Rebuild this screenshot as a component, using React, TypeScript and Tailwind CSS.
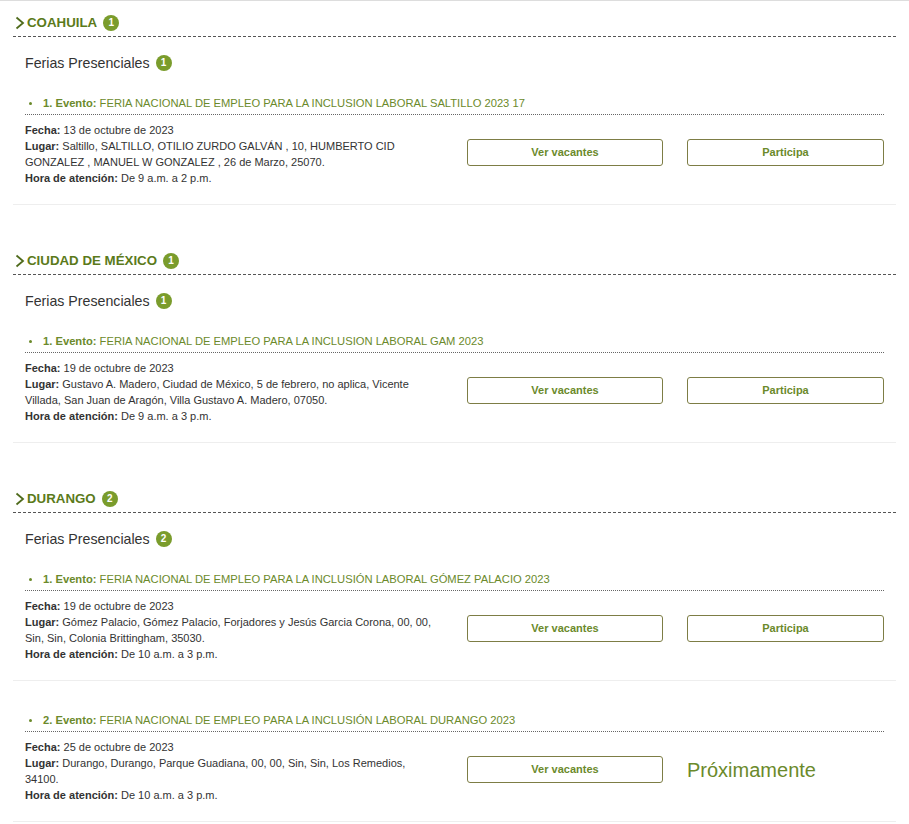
import React from 'react';

type Evento = {
  titulo: string;
  fecha: string;
  lugar: string;
  hora: string;
  proximamente?: boolean;
};

type Estado = {
  nombre: string;
  eventos: Evento[];
};

const estados: Estado[] = [
  {
    nombre: 'COAHUILA',
    eventos: [
      {
        titulo: 'FERIA NACIONAL DE EMPLEO PARA LA INCLUSION LABORAL SALTILLO 2023 17',
        fecha: '13 de octubre de 2023',
        lugar:
          'Saltillo, SALTILLO, OTILIO ZURDO GALVÁN , 10, HUMBERTO CID GONZALEZ , MANUEL W GONZALEZ , 26 de Marzo, 25070.',
        hora: 'De 9 a.m. a 2 p.m.',
      },
    ],
  },
  {
    nombre: 'CIUDAD DE MÉXICO',
    eventos: [
      {
        titulo: 'FERIA NACIONAL DE EMPLEO PARA LA INCLUSION LABORAL GAM 2023',
        fecha: '19 de octubre de 2023',
        lugar:
          'Gustavo A. Madero, Ciudad de México, 5 de febrero, no aplica, Vicente Villada, San Juan de Aragón, Villa Gustavo A. Madero, 07050.',
        hora: 'De 9 a.m. a 3 p.m.',
      },
    ],
  },
  {
    nombre: 'DURANGO',
    eventos: [
      {
        titulo: 'FERIA NACIONAL DE EMPLEO PARA LA INCLUSIÓN LABORAL GÓMEZ PALACIO 2023',
        fecha: '19 de octubre de 2023',
        lugar:
          'Gómez Palacio, Gómez Palacio, Forjadores y Jesús Garcia Corona, 00, 00, Sin, Sin, Colonia Brittingham, 35030.',
        hora: 'De 10 a.m. a 3 p.m.',
      },
      {
        titulo: 'FERIA NACIONAL DE EMPLEO PARA LA INCLUSIÓN LABORAL DURANGO 2023',
        fecha: '25 de octubre de 2023',
        lugar: 'Durango, Durango, Parque Guadiana, 00, 00, Sin, Sin, Los Remedios, 34100.',
        hora: 'De 10 a.m. a 3 p.m.',
        proximamente: true,
      },
    ],
  },
];

function Badge({ n }: { n: number }) {
  return (
    <span className="ml-[6px] inline-flex h-[16px] w-[16px] items-center justify-center rounded-full bg-[#7a9c2c] text-[10px] font-bold leading-none text-white">
      {n}
    </span>
  );
}

function Chevron() {
  return (
    <svg width="10" height="14" viewBox="0 0 10 14" className="mr-[2px]">
      <polyline points="1.5,1.5 8,7 1.5,12.5" fill="none" stroke="#4f6b1c" strokeWidth="1.8" />
    </svg>
  );
}

function EventoItem({ ev, idx }: { ev: Evento; idx: number }) {
  return (
    <div className={idx === 1 ? 'px-[12px] pt-[22px]' : 'px-[12px] pt-[31px]'}>
      <div className="flex items-center border-b border-dotted border-[#666] pb-[3px] text-[11.2px] leading-[16px] text-[#6b8a2b]">
        <span className="ml-[4px] mr-[11px] h-[3px] w-[3px] rounded-full bg-[#6b8a2b]" />
        <span>
          <b>{idx}. Evento:</b> {ev.titulo}
        </span>
      </div>
      <div className="flex items-start pt-[7px] pb-[18px]">
        <div className="w-[415px] text-[11px] leading-[16px] text-[#333]">
          <div>
            <b>Fecha:</b> {ev.fecha}
          </div>
          <div>
            <b>Lugar:</b> {ev.lugar}
          </div>
          <div>
            <b>Hora de atención:</b> {ev.hora}
          </div>
        </div>
        <div className="ml-[27px] mt-[17px] flex items-center">
          <button className="h-[27px] w-[196px] rounded-[3px] border border-[#7d7d45] bg-white text-[11px] font-bold text-[#6b8a2b]">
            Ver vacantes
          </button>
          {ev.proximamente ? (
            <span className="ml-[24px] text-[20px] leading-[24px] text-[#6b8a2b]">Próximamente</span>
          ) : (
            <button className="ml-[24px] h-[27px] w-[197px] rounded-[3px] border border-[#7d7d45] bg-white text-[11px] font-bold text-[#6b8a2b]">
              Participa
            </button>
          )}
        </div>
      </div>
    </div>
  );
}

export default function App() {
  return (
    <div
      className="min-h-[824px] border-t border-[#ddd] bg-white px-[13px]"
      style={{ fontFamily: '"Liberation Sans", Arial, sans-serif' }}
    >
      {estados.map((estado, i) => (
        <section key={estado.nombre} className={i === 0 ? '' : 'mt-[34px]'}>
          <div className="flex items-center border-b border-dashed border-[#555] pt-[12px] pb-[3px] pl-[2px]">
            <Chevron />
            <span className="text-[13.3px] font-bold leading-[20px] text-[#5b7a1a]">{estado.nombre}</span>
            <Badge n={estado.eventos.length} />
          </div>
          <div className="mt-[16px] flex items-center px-[12px]">
            <span className="text-[14.2px] leading-[20px] text-[#333]">Ferias Presenciales</span>
            <Badge n={estado.eventos.length} />
          </div>
          {estado.eventos.map((ev, j) => (
            <div key={ev.titulo} className="border-b border-[#eee]">
              <EventoItem ev={ev} idx={j + 1} />
            </div>
          ))}
        </section>
      ))}
    </div>
  );
}
